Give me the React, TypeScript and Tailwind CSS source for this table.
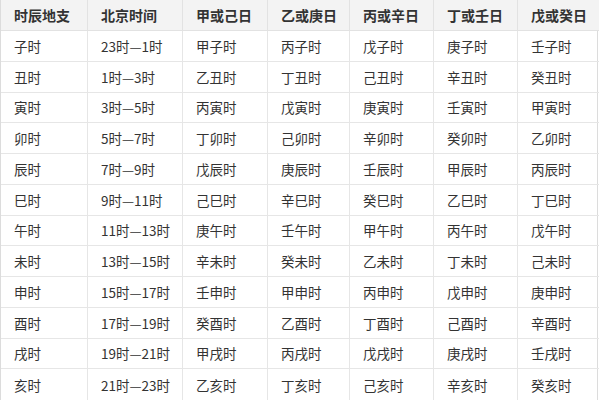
import React from 'react';

const headers = ['时辰地支', '北京时间', '甲或己日', '乙或庚日', '丙或辛日', '丁或壬日', '戊或癸日'];

const rows: string[][] = [
  ['子时', '23时—1时', '甲子时', '丙子时', '戊子时', '庚子时', '壬子时'],
  ['丑时', '1时—3时', '乙丑时', '丁丑时', '己丑时', '辛丑时', '癸丑时'],
  ['寅时', '3时—5时', '丙寅时', '戊寅时', '庚寅时', '壬寅时', '甲寅时'],
  ['卯时', '5时—7时', '丁卯时', '己卯时', '辛卯时', '癸卯时', '乙卯时'],
  ['辰时', '7时—9时', '戊辰时', '庚辰时', '壬辰时', '甲辰时', '丙辰时'],
  ['巳时', '9时—11时', '己巳时', '辛巳时', '癸巳时', '乙巳时', '丁巳时'],
  ['午时', '11时—13时', '庚午时', '壬午时', '甲午时', '丙午时', '戊午时'],
  ['未时', '13时—15时', '辛未时', '癸未时', '乙未时', '丁未时', '己未时'],
  ['申时', '15时—17时', '壬申时', '甲申时', '丙申时', '戊申时', '庚申时'],
  ['酉时', '17时—19时', '癸酉时', '乙酉时', '丁酉时', '己酉时', '辛酉时'],
  ['戌时', '19时—21时', '甲戌时', '丙戌时', '戊戌时', '庚戌时', '壬戌时'],
  ['亥时', '21时—23时', '乙亥时', '丁亥时', '己亥时', '辛亥时', '癸亥时'],
];

export default function App() {
  return (
    <div
      className="w-[600px] h-[400px] bg-white overflow-hidden"
      style={{ fontFamily: '"Noto Sans CJK SC", "Noto Sans", sans-serif' }}
    >
      <div className="grid grid-cols-[86px_95px_85px_82px_84px_84px_82px] grid-rows-[31px_repeat(12,1fr)] h-[400px] w-[598px] border-l border-r border-[#dcdcdc] text-[#333]">
        {headers.map((h, i) => (
          <div
            key={h}
            className={`flex items-center pl-[13px] bg-[#f3f3f3] text-[14px] font-bold border-b border-[#e2e2e2] ${i > 0 ? 'border-l' : ''}`}
          >
            {h}
          </div>
        ))}
        {rows.map((r, ri) =>
          r.map((c, ci) => (
            <div
              key={`${ri}-${ci}`}
              className={`flex items-center pl-[13px] text-[13.5px] border-[#e6e6e6] ${ri < rows.length - 1 ? 'border-b' : ''} ${ci > 0 ? 'border-l' : ''}`}
            >
              {c}
            </div>
          ))
        )}
      </div>
    </div>
  );
}
